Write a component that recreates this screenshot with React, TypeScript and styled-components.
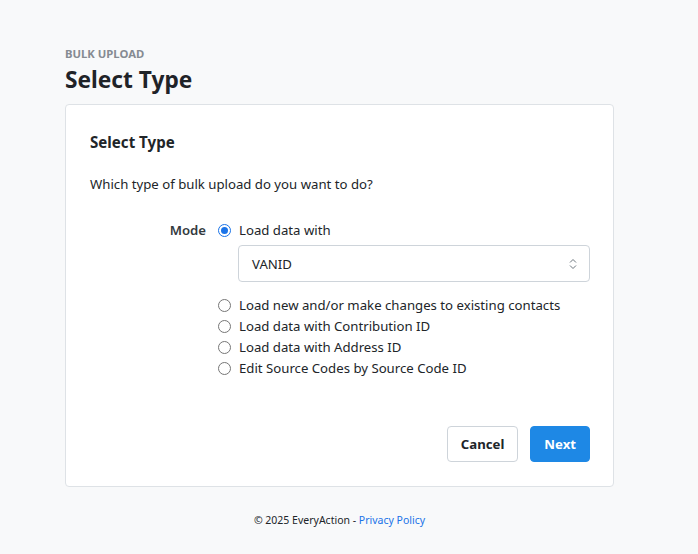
import React, { useState } from "react";
import styled, { createGlobalStyle } from "styled-components";

const Global = createGlobalStyle`
  html, body { margin: 0; padding: 0; background: #f8f9fa; }
  body { font-family: "Noto Sans", "Open Sans", sans-serif; color: #212529; }
  * { box-sizing: border-box; }
`;

const Page = styled.div`
  width: 549px;
  margin-left: 65px;
  padding-top: 46px;
`;

const Eyebrow = styled.div`
  font-size: 11.3px;
  font-weight: 700;
  color: #868b92;
  line-height: 16px;
`;

const Heading = styled.h1`
  margin: 2px 0 0;
  font-size: 22.7px;
  font-weight: 700;
  line-height: 32px;
  color: #1f2328;
`;

const Card = styled.div`
  margin-top: 8px;
  background: #fff;
  border: 1px solid #dee2e6;
  border-radius: 4px;
  padding: 26px 23px 24px 24px;
`;

const CardTitle = styled.h2`
  margin: 0;
  font-size: 15.1px;
  font-weight: 700;
  line-height: 22px;
`;

const Description = styled.p`
  margin: 21px 0 0;
  font-size: 13.2px;
  line-height: 20px;
`;

const FormRow = styled.div`
  display: grid;
  grid-template-columns: 116px 1fr;
  column-gap: 12px;
  margin-top: 26px;
`;

const Label = styled.div`
  text-align: right;
  font-size: 13.2px;
  font-weight: 600;
  line-height: 21px;
  color: #343a40;
`;

const Options = styled.div`
  display: flex;
  flex-direction: column;
`;

const Option = styled.label`
  display: flex;
  align-items: center;
  gap: 8px;
  font-size: 13.2px;
  line-height: 21px;
  color: #212529;
  cursor: pointer;
`;

const Radio = styled.span<{ $checked: boolean }>`
  width: 13px;
  height: 13px;
  border-radius: 50%;
  flex: none;
  border: ${(p) => (p.$checked ? "1.5px solid #1a73e8" : "1px solid #767676")};
  background: #fff;
  display: flex;
  align-items: center;
  justify-content: center;
  &::after {
    content: "";
    width: 7px;
    height: 7px;
    border-radius: 50%;
    background: ${(p) => (p.$checked ? "#1a73e8" : "transparent")};
  }
`;

const SelectBox = styled.div`
  margin: 4px 0 13px 20px;
  height: 37px;
  border: 1px solid #ced4da;
  border-radius: 4px;
  display: flex;
  align-items: center;
  justify-content: space-between;
  padding: 0 12px 0 13px;
  font-size: 13.2px;
  color: #212529;
`;

const Footer = styled.div`
  display: flex;
  justify-content: flex-end;
  gap: 12px;
  margin-top: 47px;
`;

const Button = styled.button<{ $primary?: boolean }>`
  height: 36px;
  padding: 0 13px;
  border-radius: 4px;
  font-family: inherit;
  font-size: 13.2px;
  font-weight: 700;
  border: 1px solid ${(p) => (p.$primary ? "#1e88e5" : "#ced4da")};
  background: ${(p) => (p.$primary ? "#1e88e5" : "#fff")};
  color: ${(p) => (p.$primary ? "#fff" : "#212529")};
  cursor: pointer;
`;

const Copy = styled.div`
  text-align: center;
  font-size: 10.5px;
  margin-top: 25px;
  color: #212529;
  line-height: 16px;
  a { color: #1a73e8; text-decoration: none; }
`;

const options = [
  "Load new and/or make changes to existing contacts",
  "Load data with Contribution ID",
  "Load data with Address ID",
  "Edit Source Codes by Source Code ID",
];

export default function App() {
  const [mode, setMode] = useState("vanid");
  return (
    <>
      <Global />
      <Page>
        <Eyebrow>BULK UPLOAD</Eyebrow>
        <Heading>Select Type</Heading>
        <Card>
          <CardTitle>Select Type</CardTitle>
          <Description>Which type of bulk upload do you want to do?</Description>
          <FormRow>
            <Label>Mode</Label>
            <Options>
              <Option onClick={() => setMode("vanid")}>
                <Radio $checked={mode === "vanid"} />
                Load data with
              </Option>
              <SelectBox>
                <span>VANID</span>
                <svg width="8" height="12" viewBox="0 0 8 12" fill="none" stroke="#6c757d" strokeWidth="1">
                  <path d="M1 4.5 L4 1.5 L7 4.5" />
                  <path d="M1 7.5 L4 10.5 L7 7.5" />
                </svg>
              </SelectBox>
              {options.map((o) => (
                <Option key={o} onClick={() => setMode(o)}>
                  <Radio $checked={mode === o} />
                  {o}
                </Option>
              ))}
            </Options>
          </FormRow>
          <Footer>
            <Button>Cancel</Button>
            <Button $primary>Next</Button>
          </Footer>
        </Card>
        <Copy>
          © 2025 EveryAction - <a href="#">Privacy Policy</a>
        </Copy>
      </Page>
    </>
  );
}
